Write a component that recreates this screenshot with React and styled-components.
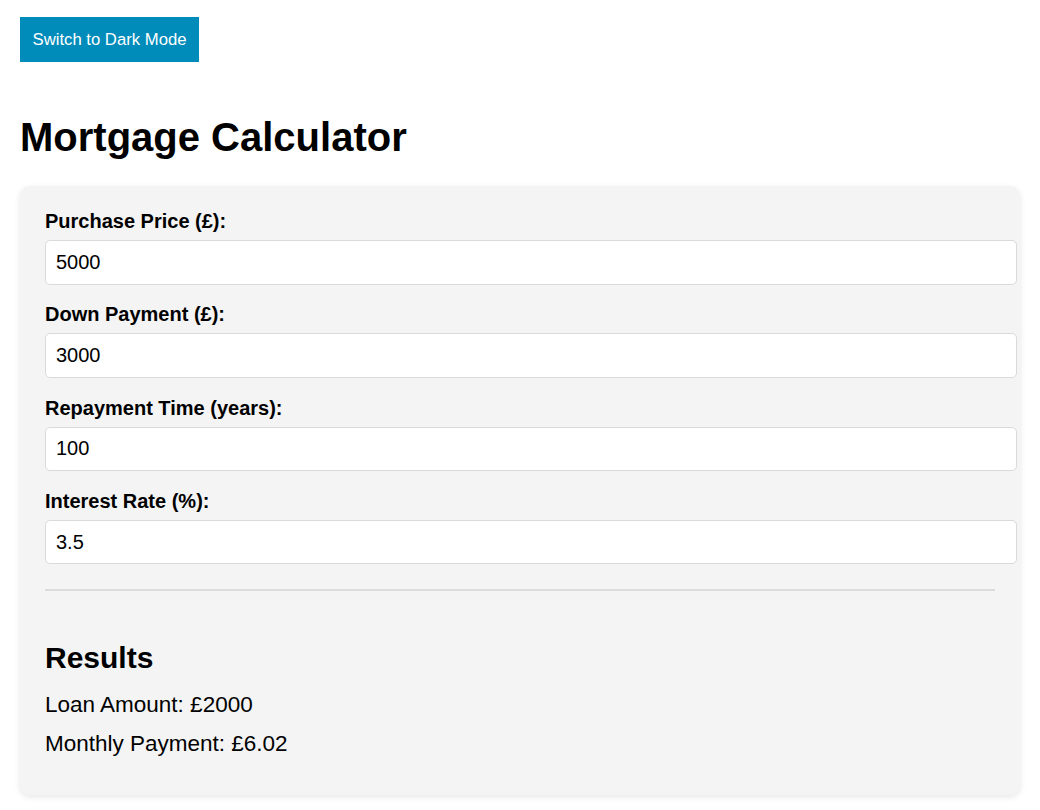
import React, { useState } from 'react';
import styled, { createGlobalStyle } from 'styled-components';

const GlobalStyle = createGlobalStyle`
    body {
        margin: 0;
        background: #ffffff;
        font-family: "Liberation Sans", Arial, sans-serif;
        color: #000;
    }
`;

const Page = styled.div`
    padding: 17px 20px 20px;
`;

const ModeButton = styled.button`
    display: block;
    width: 179px;
    height: 45px;
    padding: 0;
    border: none;
    border-radius: 0;
    background: #008cba;
    color: #fff;
    font-family: inherit;
    font-size: 16.7px;
    cursor: pointer;
`;

const Title = styled.h1`
    margin: 52px 0 26px;
    font-size: 40px;
    line-height: 46px;
    font-weight: bold;
`;

const Card = styled.div`
    width: 950px;
    padding: 24px 25px 25px;
    background: #f4f4f4;
    border-radius: 10px;
    box-shadow: 0 2px 6px rgba(0, 0, 0, 0.1);
`;

const Field = styled.div`
    margin-bottom: 18.75px;
`;

const Label = styled.label`
    display: block;
    margin-bottom: 7px;
    font-size: 20px;
    line-height: 23px;
    font-weight: bold;
`;

const Input = styled.input`
    display: block;
    width: 100%;
    box-sizing: content-box;
    padding: 10px;
    border: 1px solid #dadada;
    border-radius: 5px;
    background: #fff;
    font-family: inherit;
    font-size: 20px;
    line-height: 22.5px;
    height: 22.5px;
    color: #000;
    outline: none;
`;

const Divider = styled.hr`
    margin: 25px 0 0;
    border: none;
    border-top: 2px solid #dcdcdc;
    height: 0;
`;

const ResultsTitle = styled.h2`
    margin: 49.5px 0 16.5px;
    font-size: 30px;
    line-height: 34.5px;
    font-weight: bold;
`;

const ResultLine = styled.p`
    margin: 0 0 13.5px;
    font-size: 22.5px;
    line-height: 26px;
    &:last-child {
        margin-bottom: 13px;
    }
`;

const fields = [
    { id: 'price', label: 'Purchase Price (£):', value: '5000' },
    { id: 'down', label: 'Down Payment (£):', value: '3000' },
    { id: 'years', label: 'Repayment Time (years):', value: '100' },
    { id: 'rate', label: 'Interest Rate (%):', value: '3.5' },
];

export default function App() {
    const [values, setValues] = useState(() =>
        Object.fromEntries(fields.map(f => [f.id, f.value])));

    const price = parseFloat(values.price) || 0;
    const down = parseFloat(values.down) || 0;
    const loan = price - down;
    const n = (parseFloat(values.years) || 0) * 12;
    const r = (parseFloat(values.rate) || 0) / 100 / 12;
    const monthly = r === 0 ? (n ? loan / n : 0) : loan * r / (1 - Math.pow(1 + r, -n));

    return (
        <Page>
            <GlobalStyle />
            <ModeButton>Switch to Dark Mode</ModeButton>
            <Title>Mortgage Calculator</Title>
            <Card>
                {fields.map(f => (
                    <Field key={f.id}>
                        <Label htmlFor={f.id}>{f.label}</Label>
                        <Input
                            id={f.id}
                            type="text"
                            value={values[f.id]}
                            onChange={e => setValues({ ...values, [f.id]: e.target.value })}
                        />
                    </Field>
                ))}
                <Divider />
                <ResultsTitle>Results</ResultsTitle>
                <ResultLine>Loan Amount: £{loan}</ResultLine>
                <ResultLine>Monthly Payment: £{monthly.toFixed(2)}</ResultLine>
            </Card>
        </Page>
    );
}
